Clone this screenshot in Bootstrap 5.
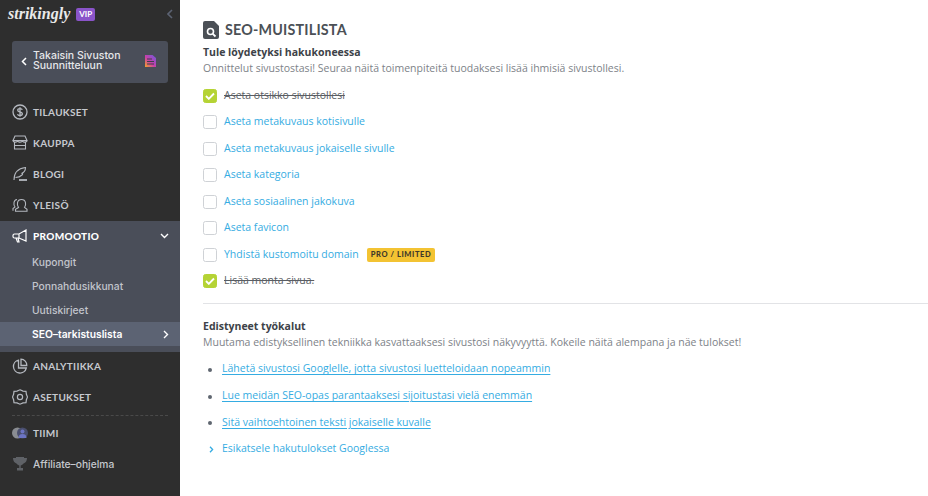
<!DOCTYPE html>
<html lang="fi">
<head>
<meta charset="utf-8">
<title>SEO-muistilista</title>
<link href="https://cdn.jsdelivr.net/npm/bootstrap@5.3.0/dist/css/bootstrap.min.css" rel="stylesheet">
<style>
html,body{height:496px;overflow:hidden}
body{font-family:"Open Sans",sans-serif;background:#fff;color:#4b5056}
.shell{height:496px}
.side{width:180px;flex:none;background:#2e2e2e;height:496px;color:#c6c9cf}
.brandrow{height:28px;margin-bottom:13px;padding:0 7px 0 8px}
.brandname{font-family:"Liberation Serif",serif;font-style:italic;font-weight:700;font-size:16px;color:#e9e9e9;line-height:1}
.vip{background:#8a54c9;color:#fff;font:700 8px "Lato",sans-serif;padding:2px 3px;border-radius:2px;margin-left:6px;height:13px;line-height:9px}
.collapse-arrow{margin-left:auto}
.backbtn{margin:0 12px;height:42px;background:#4a4e59;border-radius:3px;color:#e6e7ea;font:500 10.5px/10.5px "Inter",sans-serif;padding:0 12px 2px 9px}
.backtxt{margin-left:6px;flex:1}
.navlist{margin-top:13px}
.nav-row{height:31px;padding-left:12px;font:700 10px "Lato",sans-serif;letter-spacing:.3px;color:#c6c9cf;text-decoration:none}
.nav-row svg{flex:none;margin-right:5px}
.promo{background:#4a4e59;height:131px;margin:1px 0 -2px}
.promo .nav-row{color:#fff;font-weight:900;height:29px}
.sub{height:24px;padding-left:32px;font:500 10.3px "Inter",sans-serif;color:#c2c5cc}
.sub.now{background:#5c6373;color:#fff;font-weight:600;padding-right:11px}
.rule-d{border-top:1px dashed #4a4a4a;margin:3px 12px 1px}
.main{padding:0 0 0 23px;flex:1;min-width:0;font-size:10.5px}
.ttl{margin:21px 0 0;height:18px;font:700 14.3px/18px "Lato",sans-serif;color:#4b5056;letter-spacing:.2px}
.ttl svg{margin-right:6px}
.h-sub{font-size:10.5px;font-weight:700;color:#3d4248;margin:6px 0 0;line-height:15px}
.para{font-size:10.5px;color:#7d8288;margin:0;line-height:16px}
.checks{margin-top:6.5px}
.chk{height:26.5px}
.box{width:14px;height:14px;border:1px solid #cfd2d6;border-radius:2.5px;margin-right:7px;background:#fff;flex:none}
.box.on{background:#b5d335;border-color:#b5d335}
.chk a{color:#35ace2;text-decoration:none}
.chk s{color:#5a5e64}
.tag{background:#f3c332;color:#40392a;font:900 7.5px "Lato",sans-serif;letter-spacing:.6px;padding:3px 4px;border-radius:2px;margin-left:8px;line-height:8px}
.sep{border-top:1px solid #e2e3e6;margin:8.5px 0 0}
.adv{margin-top:15px}
.links{margin:6px 0 0;padding:0;list-style:none}
.links li{height:26.6px;display:flex;align-items:center;padding-left:19px;position:relative}
.links li .dot{width:4px;height:4px;border-radius:50%;background:#5f6670;position:absolute;left:5px;top:12px}
.links a{color:#35ace2;text-decoration:underline;text-underline-offset:2px}
.links a.plain{text-decoration:none}
.links svg{position:absolute;left:6px;top:10px}
</style>
</head>
<body>
<div class="d-flex shell">
<aside class="side d-flex flex-column">
  <div class="brandrow d-flex align-items-center">
    <span class="brandname">strikingly</span><span class="vip">VIP</span>
    <svg class="collapse-arrow" width="6" height="10" viewBox="0 0 6 10"><path d="M5 1 1 5l4 4" fill="none" stroke="#5c6373" stroke-width="1.6"/></svg>
  </div>
  <div class="backbtn d-flex align-items-center">
    <svg width="6" height="9" viewBox="0 0 6 9"><path d="M5 1 1.500 4.500 5 8" fill="none" stroke="#fff" stroke-width="1.500"/></svg>
    <span class="backtxt">Takaisin Sivuston Suunnitteluun</span>
    <svg width="11" height="12" viewBox="0 0 11 12"><defs><linearGradient id="g" x1="0" y1="1" x2="1" y2="0"><stop offset="0" stop-color="#f6a623"/><stop offset=".45" stop-color="#c93fa8"/><stop offset="1" stop-color="#6a5be0"/></linearGradient></defs><path d="M0 0h7.500L11 3v9H0z" fill="url(#g)"/><path d="M2 4h5M2 6.500h7M2 9h7" stroke="#3d3f4c" stroke-width="1"/></svg>
  </div>
  <nav class="navlist">
    <a class="nav-row d-flex align-items-center"><svg width="16" height="16" viewBox="0 0 16 16" fill="none" stroke="#b4b8bf" stroke-width="1.300"><circle cx="8" cy="8" r="7"/><path d="M10.300 5.800C10 4.900 9 4.600 8 4.600c-1.300 0-2.300.6-2.300 1.700C5.700 8.700 10.400 7.300 10.400 9.800c0 1-1.100 1.700-2.400 1.700-1.200 0-2.200-.5-2.500-1.400M8 3.300v9.400"/></svg>TILAUKSET</a>
    <a class="nav-row d-flex align-items-center"><svg width="16" height="15" viewBox="0 0 16 15" fill="none" stroke="#b4b8bf" stroke-width="1.100"><path d="M3 1h10l2 4.500H1zM1 5.500c0 1.600 2.300 1.600 2.300 1.600s2.300 0 2.300-1.600c0 1.600 2.400 1.600 2.400 1.600s2.400 0 2.400-1.600c0 1.600 2.300 1.600 2.300 1.600S15 7.100 15 5.500M2.500 7v7h11V7M2.500 10.500h11"/></svg>KAUPPA</a>
    <a class="nav-row d-flex align-items-center"><svg width="16" height="16" viewBox="0 0 16 16" fill="none" stroke="#b4b8bf" stroke-width="1.100"><path d="M2 14C2 8 5 2.500 13.500 1.500 13.500 5 12 6.500 9.500 7.500 11 7.500 11 8 10 9 8.500 10.500 6 11.500 3.500 11.500"/><path d="M7 14h8" stroke-width="1.800"/></svg>BLOGI</a>
    <a class="nav-row d-flex align-items-center"><svg width="16" height="16" viewBox="0 0 16 16" fill="none" stroke="#b4b8bf" stroke-width="1.100"><path d="M6.500 10.500c-1.800-2.500-1.800-8 3-8s4.800 5.500 3 8l2.500 1.800v2H3.500v-2z"/><path d="M5 2.500C1.500 3 1.200 7.500 3 10l-2 1.500v2.300"/></svg>YLEISÖ</a>
    <div class="promo">
      <a class="nav-row d-flex align-items-center"><svg width="16" height="14" viewBox="0 0 16 14" fill="none" stroke="#fff" stroke-width="1.200"><path d="M14 1v11L7 9H2.500C1.500 9 1 8.300 1 7.500v-1C1 5.500 1.500 5 2.500 5H7zM7 5v4M4 9l1.500 4H7L6 9"/></svg>PROMOOTIO<svg class="ms-auto" style="margin-right:11px" width="9" height="6" viewBox="0 0 9 6"><path d="M1 1l3.500 3.500L8 1" fill="none" stroke="#fff" stroke-width="1.400"/></svg></a>
      <div>
        <div class="sub d-flex align-items-center">Kupongit</div>
        <div class="sub d-flex align-items-center">Ponnahdusikkunat</div>
        <div class="sub d-flex align-items-center">Uutiskirjeet</div>
        <div class="sub now d-flex align-items-center justify-content-between">SEO–tarkistuslista<svg width="6" height="9" viewBox="0 0 6 9"><path d="M1 1l3.500 3.500L1 8" fill="none" stroke="#fff" stroke-width="1.400"/></svg></div>
      </div>
    </div>
    <a class="nav-row d-flex align-items-center"><svg width="16" height="16" viewBox="0 0 16 16" fill="none" stroke="#b4b8bf" stroke-width="1.300"><path d="M6.500 2.200A6.500 6.500 0 1 0 14.300 10H6.500z"/><path d="M9 1.200A6 6 0 0 1 14.800 7.500H9z"/></svg>ANALYTIIKKA</a>
    <a class="nav-row d-flex align-items-center"><svg width="16" height="16" viewBox="0 0 16 16" fill="none" stroke="#b4b8bf" stroke-width="1.200"><path d="M8 .8l3 1.300 3 .3.400 2.900L15.500 8l-1.100 2.700-.4 2.900-3 .3-3 1.300-3-1.300-3-.3-.4-2.900L.5 8l1.100-2.700.4-2.900 3-.3z"/><circle cx="8" cy="8" r="2.600"/></svg>ASETUKSET</a>
    <div class="rule-d"></div>
    <a class="nav-row d-flex align-items-center"><svg width="16" height="12" viewBox="0 0 16 12"><circle cx="5.500" cy="6" r="5.500" fill="#8a8d92"/><circle cx="10.500" cy="6" r="5.500" fill="#4a4f6d"/><circle cx="10.500" cy="4.500" r="2" fill="#6c74c4"/><path d="M6.500 11a4 4 0 0 1 8 0z" fill="#6c74c4"/></svg>TIIMI</a>
    <a class="nav-row d-flex align-items-center" style="font:500 10.250px 'Inter',sans-serif;letter-spacing:0"><svg width="16" height="14" viewBox="0 0 16 14" fill="#5f6267"><path d="M4 0h8v1h3c0 3-1.500 5-3.500 5.500C10.800 7.700 9.500 8.300 8.700 8.500V11H11v2.500H5V11h2.300V8.500C6.500 8.300 5.200 7.700 4.500 6.500 2.500 6 1 4 1 1h3z"/></svg>Affiliate–ohjelma</a>
  </nav>
</aside>
<main class="main">
  <h1 class="ttl d-flex align-items-center"><svg width="16" height="18" viewBox="0 0 16 18"><path d="M0 2a2 2 0 0 1 2-2h9l5 5v11a2 2 0 0 1-2 2H2a2 2 0 0 1-2-2z" fill="#4b5056"/><circle cx="7.500" cy="10.500" r="3" fill="none" stroke="#fff" stroke-width="1.600"/><path d="M9.800 12.800l2.700 2.700" stroke="#fff" stroke-width="1.800"/></svg>SEO-MUISTILISTA</h1>
  <h2 class="h-sub">Tule löydetyksi hakukoneessa</h2>
  <p class="para">Onnittelut sivustostasi! Seuraa näitä toimenpiteitä tuodaksesi lisää ihmisiä sivustollesi.</p>
  <div class="checks">
    <div class="chk d-flex align-items-center"><span class="box on d-flex align-items-center justify-content-center"><svg width="10" height="8" viewBox="0 0 10 8"><path d="M1 4l2.800 2.800L9 1.500" fill="none" stroke="#fff" stroke-width="1.900"/></svg></span><s>Aseta otsikko sivustollesi</s></div>
    <div class="chk d-flex align-items-center"><span class="box"></span><a href="#">Aseta metakuvaus kotisivulle</a></div>
    <div class="chk d-flex align-items-center"><span class="box"></span><a href="#">Aseta metakuvaus jokaiselle sivulle</a></div>
    <div class="chk d-flex align-items-center"><span class="box"></span><a href="#">Aseta kategoria</a></div>
    <div class="chk d-flex align-items-center"><span class="box"></span><a href="#">Aseta sosiaalinen jakokuva</a></div>
    <div class="chk d-flex align-items-center"><span class="box"></span><a href="#">Aseta favicon</a></div>
    <div class="chk d-flex align-items-center"><span class="box"></span><a href="#">Yhdistä kustomoitu domain</a><span class="tag">PRO / LIMITED</span></div>
    <div class="chk d-flex align-items-center"><span class="box on d-flex align-items-center justify-content-center"><svg width="10" height="8" viewBox="0 0 10 8"><path d="M1 4l2.800 2.800L9 1.500" fill="none" stroke="#fff" stroke-width="1.900"/></svg></span><s>Lisää monta sivua.</s></div>
  </div>
  <div class="sep"></div>
  <h2 class="h-sub adv">Edistyneet työkalut</h2>
  <p class="para">Muutama edistyksellinen tekniikka kasvattaaksesi sivustosi näkyvyyttä. Kokeile näitä alempana ja näe tulokset!</p>
  <ul class="links">
    <li><span class="dot"></span><a href="#">Lähetä sivustosi Googlelle, jotta sivustosi luetteloidaan nopeammin</a></li>
    <li><span class="dot"></span><a href="#">Lue meidän SEO-opas parantaaksesi sijoitustasi vielä enemmän</a></li>
    <li><span class="dot"></span><a href="#">Sitä vaihtoehtoinen teksti jokaiselle kuvalle</a></li>
    <li><svg width="5" height="7" viewBox="0 0 5 7"><path d="M1 .8l2.600 2.700L1 6.200" fill="none" stroke="#35ace2" stroke-width="1.300"/></svg><a class="plain" href="#">Esikatsele hakutulokset Googlessa</a></li>
  </ul>
</main>
</div>
</body>
</html>
